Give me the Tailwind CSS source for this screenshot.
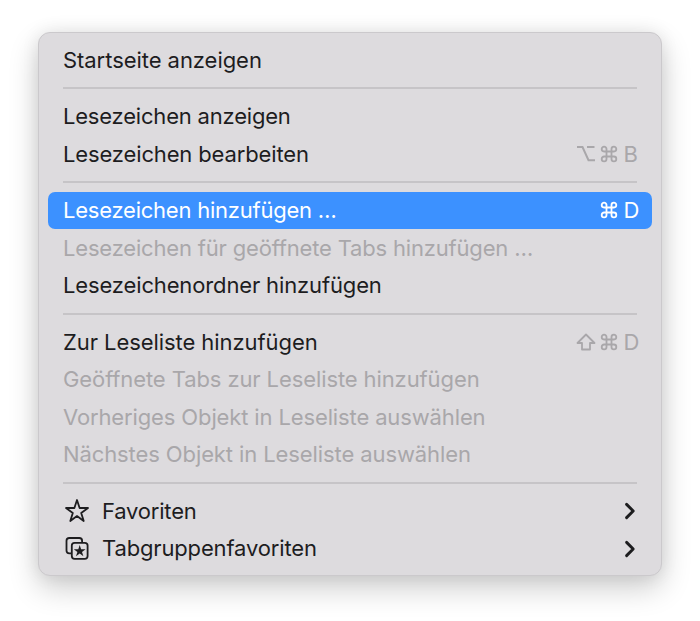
<!DOCTYPE html>
<html lang="de">
<head>
  <meta charset="UTF-8">
  <meta name="viewport" content="width=device-width, initial-scale=1.0">
  <title>Lesezeichen</title>
  <script src="https://cdn.jsdelivr.net/npm/@tailwindcss/browser@4"></script>
</head>
<body class="bg-white h-[621px] overflow-hidden pt-8 pl-[38px] font-['Inter',sans-serif]">
  <!-- Shared key symbols -->
  <svg class="hidden">
    <symbol id="cmd" viewBox="0 0 18 18">
      <path d="M6.5 6.5V4.1a2.4 2.4 0 1 0-2.4 2.4h9.8a2.4 2.4 0 1 0-2.4-2.4v9.8a2.4 2.4 0 1 0 2.4-2.4H4.1a2.4 2.4 0 1 0 2.4 2.4z" fill="none" stroke="currentColor" stroke-width="1.8"/>
    </symbol>
    <symbol id="chevron" viewBox="0 0 12 18">
      <path d="M2.6 2.4L9.2 9l-6.6 6.6" fill="none" stroke="currentColor" stroke-width="2.9" stroke-linecap="round" stroke-linejoin="round"/>
    </symbol>
  </svg>

  <div class="w-[624px] h-[544px] rounded-[12px] border border-[#cbc9cc] bg-[#dddbde] px-[9px] pt-[8.3px] text-[22px] text-[#1d1d1f] whitespace-nowrap shadow-[0_12px_30px_rgba(0,0,0,0.2),0_0_18px_rgba(0,0,0,0.08)]">
    <div class="h-[37.6px] px-[15px] flex items-center"><span class="tracking-[-0.05px]">Startseite anzeigen</span></div>

    <div class="h-[18.8px] px-[15px] flex items-center"><div class="h-[2px] w-[574px] bg-[#c6c4c7]"></div></div>

    <div class="h-[37.6px] px-[15px] flex items-center"><span class="tracking-[-0.2px]">Lesezeichen anzeigen</span></div>
    <div class="h-[37.6px] pl-[15px] pr-[12.5px] flex items-center justify-between">
      <span class="tracking-[-0.14px]">Lesezeichen bearbeiten</span>
      <span class="flex items-center text-[#a9a7aa]">
        <svg class="w-[18px] h-[18px] mr-[5px]" viewBox="0 0 18 18" fill="none" stroke="currentColor" stroke-width="2"><path d="M0 2h5.5l6 13.2H18M10 2h7.5"/></svg>
        <svg class="w-[18px] h-[18px]"><use href="#cmd"/></svg>
        <span class="w-[16px] ml-[6px]">B</span>
      </span>
    </div>

    <div class="h-[18.8px] px-[15px] flex items-center"><div class="h-[2px] w-[574px] bg-[#c6c4c7]"></div></div>

    <!-- Selected entry -->
    <div class="h-[37.6px] pl-[15px] pr-[12.5px] flex items-center justify-between rounded-[7px] bg-[#3c91ff] text-white">
      <span class="tracking-[-0.23px]">Lesezeichen hinzufügen …</span>
      <span class="flex items-center">
        <svg class="w-[18px] h-[18px]"><use href="#cmd"/></svg>
        <span class="w-[16px] ml-[6px]">D</span>
      </span>
    </div>
    <div class="h-[37.6px] px-[15px] flex items-center text-[#a9a7aa]"><span class="tracking-[-0.18px]">Lesezeichen für geöffnete Tabs hinzufügen …</span></div>
    <div class="h-[37.6px] px-[15px] flex items-center"><span class="tracking-[-0.14px]">Lesezeichenordner hinzufügen</span></div>

    <div class="h-[18.8px] px-[15px] flex items-center"><div class="h-[2px] w-[574px] bg-[#c6c4c7]"></div></div>

    <div class="h-[37.6px] pl-[15px] pr-[12.5px] flex items-center justify-between">
      <span class="tracking-[-0.07px]">Zur Leseliste hinzufügen</span>
      <span class="flex items-center text-[#a9a7aa]">
        <svg class="w-[20px] h-[18px] mr-[4px]" viewBox="0 0 20 18" fill="none" stroke="currentColor" stroke-width="1.8" stroke-linejoin="round"><path d="M10 1.5L18.5 10H14v6.5H6V10H1.5z"/></svg>
        <svg class="w-[18px] h-[18px]"><use href="#cmd"/></svg>
        <span class="w-[16px] ml-[6px]">D</span>
      </span>
    </div>
    <div class="h-[37.6px] px-[15px] flex items-center text-[#a9a7aa]"><span class="tracking-[-0.1px]">Geöffnete Tabs zur Leseliste hinzufügen</span></div>
    <div class="h-[37.6px] px-[15px] flex items-center text-[#a9a7aa]"><span class="tracking-[-0.13px]">Vorheriges Objekt in Leseliste auswählen</span></div>
    <div class="h-[37.6px] px-[15px] flex items-center text-[#a9a7aa]"><span class="tracking-[-0.1px]">Nächstes Objekt in Leseliste auswählen</span></div>

    <div class="h-[18.8px] px-[15px] flex items-center"><div class="h-[2px] w-[574px] bg-[#c6c4c7]"></div></div>

    <!-- Submenus -->
    <div class="h-[37.6px] pl-[15px] pr-[16.5px] flex items-center">
      <svg class="w-[26px] h-[26px] mr-[13px]" viewBox="0 0 26 26" fill="none" stroke="currentColor" stroke-width="1.8" stroke-linejoin="round"><path d="M14 2L16.6 10H25L18.2 15L20.7 23L14 18.1L7.3 23L9.8 15L3 10H11.4z"/></svg>
      <span class="tracking-[-0.2px]">Favoriten</span>
      <svg class="w-3 h-[18px] ml-auto"><use href="#chevron"/></svg>
    </div>
    <div class="h-[37.6px] pl-[15px] pr-[16.5px] flex items-center">
      <svg class="w-[26px] h-[26px] mr-[13px]" viewBox="0 0 26 26" fill="none" stroke="currentColor" stroke-width="1.8">
        <path d="M8.2 17.3H6.3a2.8 2.8 0 0 1-2.8-2.8V4.8A2.8 2.8 0 0 1 6.3 2h10a2.8 2.8 0 0 1 2.8 2.8v1.9"/>
        <rect x="8.8" y="6.8" width="15.8" height="16" rx="2.8"/>
        <path fill="currentColor" stroke="none" d="M16.7 9l1.4 4.2h4.5l-3.6 2.7 1.4 4.3-3.7-2.6-3.7 2.6 1.4-4.3-3.6-2.7h4.5z"/>
      </svg>
      <span class="tracking-[-0.15px]">Tabgruppenfavoriten</span>
      <svg class="w-3 h-[18px] ml-auto"><use href="#chevron"/></svg>
    </div>
  </div>
</body>
</html>
